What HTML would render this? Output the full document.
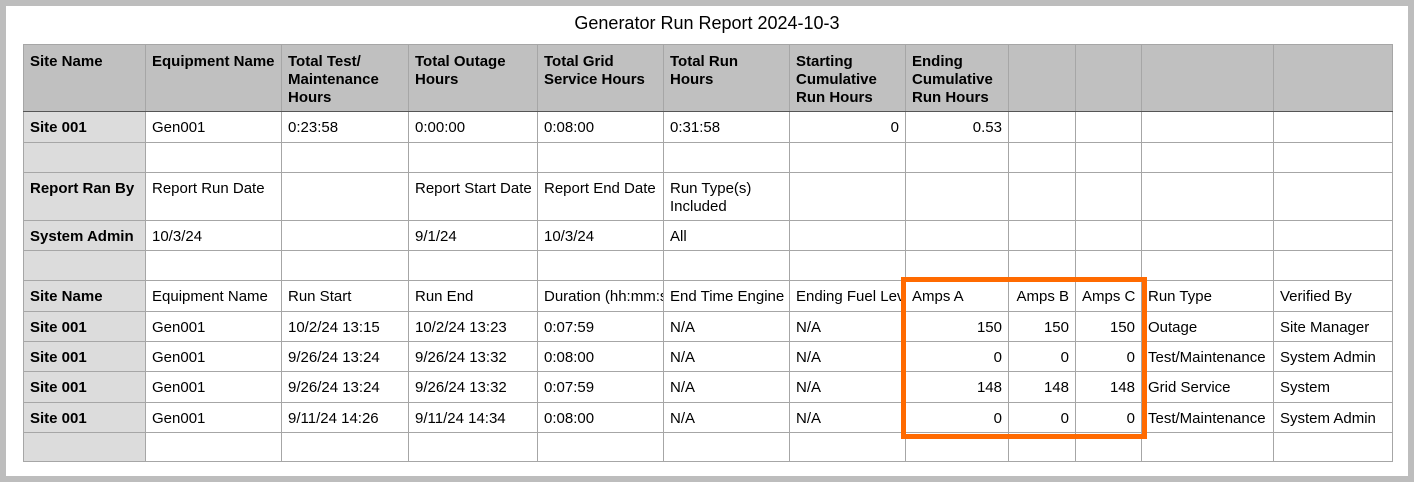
<!DOCTYPE html>
<html><head><style>
html,body{margin:0;padding:0;}
body{width:1414px;height:482px;background:#bdbdbd;position:relative;overflow:hidden;font-family:"Liberation Sans",Arial,sans-serif;}
.page{position:absolute;left:6px;top:6px;width:1402px;height:470px;background:#fff;}
.title{position:absolute;left:0;top:13px;width:1414px;text-align:center;font-size:18px;color:#000;}
table{position:absolute;left:23px;top:44px;width:1369px;border-collapse:collapse;table-layout:fixed;font-size:15px;color:#000;}
td{border:1px solid #a6a6a6;padding:7px 0 0 6px;vertical-align:top;white-space:nowrap;overflow:hidden;line-height:18px;box-sizing:border-box;}
tr.h td{background:#c0c0c0;font-weight:bold;white-space:normal;border-bottom:1px solid #555;padding-top:8px;}
td.g{background:#dcdcdc;font-weight:bold;}
td.r{text-align:right;padding-right:6px;}
td.w{white-space:normal;}
.box{position:absolute;left:901px;top:277px;width:236px;height:152px;border:5px solid #ff6a00;}
</style></head><body>
<div class="page"></div>
<div class="title">Generator Run Report 2024-10-3</div>
<table>
<colgroup><col style="width:122px"><col style="width:136px"><col style="width:127px"><col style="width:129px"><col style="width:126px"><col style="width:126px"><col style="width:116px"><col style="width:103px"><col style="width:67px"><col style="width:66px"><col style="width:132px"><col style="width:119px"></colgroup>
<tr class="h" style="height:67px"><td>Site Name</td><td>Equipment Name</td><td>Total Test/ Maintenance Hours</td><td>Total Outage Hours</td><td>Total Grid Service Hours</td><td>Total Run<br>Hours</td><td>Starting Cumulative Run Hours</td><td>Ending Cumulative Run Hours</td><td></td><td></td><td></td><td></td></tr>
<tr style="height:31px"><td class="g">Site 001</td><td>Gen001</td><td>0:23:58</td><td>0:00:00</td><td>0:08:00</td><td>0:31:58</td><td class="r">0</td><td class="r">0.53</td><td></td><td></td><td></td><td></td></tr>
<tr style="height:30px"><td class="g"></td><td></td><td></td><td></td><td></td><td></td><td></td><td></td><td></td><td></td><td></td><td></td></tr>
<tr style="height:48px"><td class="g">Report Ran By</td><td>Report Run Date</td><td></td><td>Report Start Date</td><td>Report End Date</td><td class="w">Run Type(s) Included</td><td></td><td></td><td></td><td></td><td></td><td></td></tr>
<tr style="height:30px"><td class="g">System Admin</td><td>10/3/24</td><td></td><td>9/1/24</td><td>10/3/24</td><td>All</td><td></td><td></td><td></td><td></td><td></td><td></td></tr>
<tr style="height:30px"><td class="g"></td><td></td><td></td><td></td><td></td><td></td><td></td><td></td><td></td><td></td><td></td><td></td></tr>
<tr style="height:31px"><td class="g">Site Name</td><td>Equipment Name</td><td>Run Start</td><td>Run End</td><td>Duration (hh:mm:ss)</td><td>End Time Engine Hours</td><td>Ending Fuel Level</td><td>Amps A</td><td class="r">Amps B</td><td class="r">Amps C</td><td>Run Type</td><td>Verified By</td></tr>
<tr style="height:30px"><td class="g">Site 001</td><td>Gen001</td><td>10/2/24 13:15</td><td>10/2/24 13:23</td><td>0:07:59</td><td>N/A</td><td>N/A</td><td class="r">150</td><td class="r">150</td><td class="r">150</td><td>Outage</td><td>Site Manager</td></tr>
<tr style="height:30px"><td class="g">Site 001</td><td>Gen001</td><td>9/26/24 13:24</td><td>9/26/24 13:32</td><td>0:08:00</td><td>N/A</td><td>N/A</td><td class="r">0</td><td class="r">0</td><td class="r">0</td><td>Test/Maintenance</td><td>System Admin</td></tr>
<tr style="height:31px"><td class="g">Site 001</td><td>Gen001</td><td>9/26/24 13:24</td><td>9/26/24 13:32</td><td>0:07:59</td><td>N/A</td><td>N/A</td><td class="r">148</td><td class="r">148</td><td class="r">148</td><td>Grid Service</td><td>System</td></tr>
<tr style="height:30px"><td class="g">Site 001</td><td>Gen001</td><td>9/11/24 14:26</td><td>9/11/24 14:34</td><td>0:08:00</td><td>N/A</td><td>N/A</td><td class="r">0</td><td class="r">0</td><td class="r">0</td><td>Test/Maintenance</td><td>System Admin</td></tr>
<tr style="height:29px"><td class="g"></td><td></td><td></td><td></td><td></td><td></td><td></td><td></td><td></td><td></td><td></td><td></td></tr>
</table>
<div class="box"></div>
</body></html>
